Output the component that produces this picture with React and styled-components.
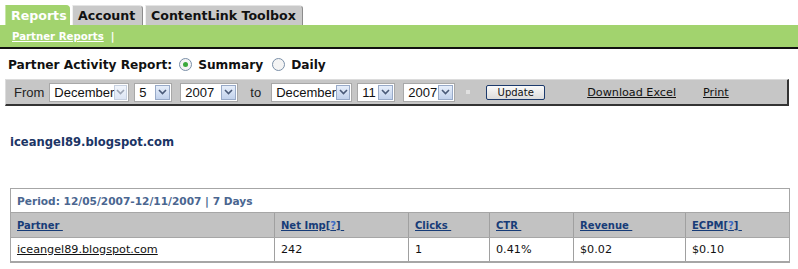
import React from 'react';
import styled, { createGlobalStyle } from 'styled-components';

const GlobalStyle = createGlobalStyle`
  body {
    margin: 0;
    background: #ffffff;
    font-family: "DejaVu Sans", Verdana, sans-serif;
  }
`;

// 整體頁面
const Page = styled.div`
  width: 798px;
  height: 269px;
  overflow: hidden;
  background: #fff;
`;

// 上方分頁
const TabRow = styled.div`
  display: flex;
  gap: 2px;
  padding: 5px 0 0 5px;
  height: 20px;
`;

const Tab = styled.div`
  height: 20px;
  width: ${(p) => p.$w}px;
  box-sizing: border-box;
  display: flex;
  align-items: center;
  padding-left: 5px;
  font-size: 12.6px;
  font-weight: bold;
  white-space: nowrap;
  color: ${(p) => (p.$active ? '#ffffff' : '#111111')};
  background: ${(p) => (p.$active ? '#a2d36e' : '#c9c9c9')};
  border-top: 1px solid ${(p) => (p.$active ? '#a2d36e' : '#e4e4e4')};
  border-left: 1px solid ${(p) => (p.$active ? '#c8e6a8' : '#f0f0f0')};
  border-right: 1px solid ${(p) => (p.$active ? '#a2d36e' : '#8c8c8c')};
  border-top-right-radius: 4px;
`;

// 綠色子選單
const SubNav = styled.div`
  height: 22px;
  background: #a2d36e;
  border-bottom: 2px solid #111;
  display: flex;
  align-items: center;
  padding-left: 12px;
  font-size: 10.2px;
  font-weight: bold;
  color: #fff;
  gap: 7px;
`;

const SubLink = styled.span`
  text-decoration: underline;
`;

const ReportHead = styled.div`
  display: flex;
  align-items: center;
  padding: 7px 0 0 8px;
  height: 17px;
  font-size: 12.2px;
  font-weight: bold;
  color: #111;
`;

const Radio = styled.span`
  width: 11px;
  height: 11px;
  border-radius: 50%;
  border: 1px solid #7a8fa8;
  background: #f4f4f4;
  display: inline-flex;
  align-items: center;
  justify-content: center;
  margin: 0 6px 0 ${(p) => p.$ml}px;
  &::after {
    content: '';
    width: 5px;
    height: 5px;
    border-radius: 50%;
    background: ${(p) => (p.$on ? '#3aa83a' : 'transparent')};
  }
`;

// 日期篩選列
const FilterBar = styled.div`
  margin: 6px 9px 0 5px;
  height: 24px;
  background: #c6c6c6;
  border-top: 1px solid #dcdcdc;
  border-left: 1px solid #dcdcdc;
  border-right: 2px solid #333;
  border-bottom: 2px solid #333;
  display: flex;
  align-items: center;
  font-family: "Liberation Sans", Arial, sans-serif;
  font-size: 13px;
  color: #222;
`;

const Label = styled.span`
  margin: 0 ${(p) => p.$mr}px 0 ${(p) => p.$ml}px;
`;

const Select = styled.div`
  width: ${(p) => p.$w}px;
  height: 19px;
  box-sizing: border-box;
  background: #fff;
  border: 1px solid #a8a8a8;
  display: flex;
  align-items: center;
  justify-content: space-between;
  padding: 0 1px 0 4px;
  margin-right: ${(p) => p.$mr}px;
  color: #111;
`;

const Arrow = styled.span`
  width: 15px;
  height: 15px;
  box-sizing: border-box;
  border: 1px solid #98aac8;
  background: linear-gradient(#e6eefa, #c2d2ec);
  display: inline-flex;
  align-items: center;
  justify-content: center;
  opacity: ${(p) => (p.$dim ? 0.55 : 1)};
`;

const Dot = styled.span`
  width: 4px;
  height: 4px;
  background: #e0e0e0;
  margin: 0 16px 0 11px;
`;

const UpdateButton = styled.span`
  width: 59px;
  height: 15px;
  box-sizing: border-box;
  border: 1px solid #1c3a6c;
  border-radius: 2px;
  background: linear-gradient(#fafafa, #dcdcdc);
  font-family: "DejaVu Sans", Verdana, sans-serif;
  font-size: 10px;
  display: flex;
  align-items: center;
  justify-content: center;
  color: #111;
  margin-right: 42px;
`;

const BarLink = styled.span`
  font-family: "DejaVu Sans", Verdana, sans-serif;
  font-size: 11.2px;
  text-decoration: underline;
  color: #111;
  margin-right: ${(p) => p.$mr}px;
`;

const SiteTitle = styled.div`
  padding: 29px 0 0 10px;
  height: 16px;
  font-size: 11.6px;
  font-weight: bold;
  color: #1b3565;
`;

// 報表表格
const Table = styled.div`
  margin: 37px 10px 0 10px;
  width: 778px;
  border: 1px solid #a6a6a6;
  border-bottom-width: 2px;
`;

const PeriodRow = styled.div`
  height: 23px;
  display: flex;
  align-items: center;
  padding-left: 6px;
  font-size: 10.6px;
  font-weight: bold;
  color: #4a6690;
  border-bottom: 1px solid #a6a6a6;
`;

const Row = styled.div`
  display: grid;
  grid-template-columns: 263px 134px 81px 84px 112px 1fr;
  background: ${(p) => (p.$head ? '#c2c2c2' : '#ffffff')};
  height: ${(p) => (p.$head ? 24 : 23)}px;
  border-bottom: ${(p) => (p.$head ? '1px solid #a6a6a6' : 'none')};
`;

const Cell = styled.div`
  display: flex;
  align-items: center;
  padding-left: 6px;
  border-left: ${(p) => (p.$first ? 'none' : '1px solid #a0a0a0')};
  font-size: ${(p) => (p.$head ? 10 : 11.2)}px;
  font-weight: ${(p) => (p.$head ? 'bold' : 'normal')};
  color: ${(p) => (p.$head ? '#173c78' : '#111')};
  text-decoration: ${(p) => (p.$link ? 'underline' : 'none')};
  white-space: pre;
`;

const Help = styled.span`
  color: #3d6bc4;
`;

const Chevron = () => (
  <svg width="9" height="6" viewBox="0 0 9 6">
    <path d="M1 1 L4.5 4.5 L8 1" fill="none" stroke="#4a5a78" strokeWidth="1.6" />
  </svg>
);

const DateSelect = ({ w, value, mr, dim }) => (
  <Select $w={w} $mr={mr}>
    <span>{value}</span>
    <Arrow $dim={dim}>
      <Chevron />
    </Arrow>
  </Select>
);

const columns = [
  { label: 'Partner ', help: false },
  { label: 'Net Imp', help: true },
  { label: 'Clicks ', help: false },
  { label: 'CTR ', help: false },
  { label: 'Revenue ', help: false },
  { label: 'ECPM', help: true },
];

const rows = [['iceangel89.blogspot.com', '242', '1', '0.41%', '$0.02', '$0.10']];

export default function App() {
  return (
    <Page>
      <GlobalStyle />
      <TabRow>
        <Tab $active $w={65}>Reports</Tab>
        <Tab $w={71}>Account</Tab>
        <Tab $w={158}>ContentLink Toolbox</Tab>
      </TabRow>
      <SubNav>
        <SubLink>Partner Reports</SubLink>
        <span>|</span>
      </SubNav>

      <ReportHead>
        Partner Activity Report:
        <Radio $on $ml={7} />
        Summary
        <Radio $ml={9} />
        Daily
      </ReportHead>

      <FilterBar>
        <Label $ml={8} $mr={5}>From</Label>
        <DateSelect w={80} value="December" mr={5} dim />
        <DateSelect w={38} value="5" mr={8} />
        <DateSelect w={58} value="2007" mr={12} />
        <Label $ml={0} $mr={10}>to</Label>
        <DateSelect w={81} value="December" mr={5} />
        <DateSelect w={38} value="11" mr={8} />
        <DateSelect w={52} value="2007" mr={0} />
        <Dot />
        <UpdateButton>Update</UpdateButton>
        <BarLink $mr={27}>Download Excel</BarLink>
        <BarLink $mr={0}>Print</BarLink>
      </FilterBar>

      <SiteTitle>iceangel89.blogspot.com</SiteTitle>

      <Table>
        <PeriodRow>Period: 12/05/2007-12/11/2007 | 7 Days</PeriodRow>
        <Row $head>
          {columns.map((c, i) => (
            <Cell key={c.label} $head $link $first={i === 0}>
              {c.label}
              {c.help && (
                <>
                  [<Help>?</Help>]{' '}
                </>
              )}
            </Cell>
          ))}
        </Row>
        {rows.map((r) => (
          <Row key={r[0]}>
            {r.map((v, i) => (
              <Cell key={i} $first={i === 0} $link={i === 0}>
                {v}
              </Cell>
            ))}
          </Row>
        ))}
      </Table>
    </Page>
  );
}
